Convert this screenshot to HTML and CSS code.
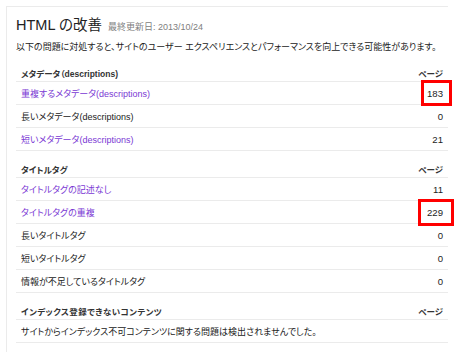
FILE: index.html
```html
<!DOCTYPE html>
<html lang="ja">
<head>
<meta charset="utf-8">
<title>HTML の改善</title>
<link rel="stylesheet" href="styles.css">
</head>
<body>
<div class="card">
  <div class="title-row">
    <h1 class="title">HTML の改善</h1>
    <span class="updated">最終更新日: 2013/10/24</span>
  </div>
  <p class="intro">以下の問題に対処すると、サイトのユーザー エクスペリエンスとパフォーマンスを向上できる可能性があります。</p>

  <div class="section">
    <div class="row head"><span class="label">メタデータ（descriptions)</span><span class="num">ページ</span></div>
    <div class="row"><a class="label link" href="#">重複するメタデータ(descriptions)</a><span class="num hl hl-a">183</span></div>
    <div class="row"><span class="label">長いメタデータ(descriptions)</span><span class="num">0</span></div>
    <div class="row"><a class="label link" href="#">短いメタデータ(descriptions)</a><span class="num">21</span></div>
  </div>

  <div class="section">
    <div class="row head"><span class="label">タイトルタグ</span><span class="num">ページ</span></div>
    <div class="row"><a class="label link" href="#">タイトルタグの記述なし</a><span class="num">11</span></div>
    <div class="row"><a class="label link" href="#">タイトルタグの重複</a><span class="num hl hl-b">229</span></div>
    <div class="row"><span class="label">長いタイトルタグ</span><span class="num">0</span></div>
    <div class="row"><span class="label">短いタイトルタグ</span><span class="num">0</span></div>
    <div class="row"><span class="label">情報が不足しているタイトルタグ</span><span class="num">0</span></div>
  </div>

  <div class="section">
    <div class="row head"><span class="label wide">インデックス登録できないコンテンツ</span><span class="num">ページ</span></div>
    <div class="row"><span class="label">サイトからインデックス不可コンテンツに関する問題は検出されませんでした。</span></div>
  </div>
</div>
</body>
</html>
```
FILE: styles.css
```css
html, body {
  margin: 0;
  padding: 0;
  background: #ffffff;
}
body {
  font-family: "Liberation Sans", "Noto Sans CJK JP", sans-serif;
  color: #222222;
  font-feature-settings: "palt";
}
.card {
  margin: 6px 22px 0 6px;
  border-top: 1px solid #ebebeb;
  border-left: 1px solid #ebebeb;
  padding: 8px 0 9px 9px;
}
.title-row {
  display: flex;
  align-items: baseline;
  gap: 6px;
  height: 20px;
  line-height: 20px;
}
.title {
  margin: 0;
  font-size: 14.5px;
  font-weight: normal;
  color: #222222;
}
.updated {
  font-size: 9px;
  color: #808080;
}
.intro {
  margin: 4px 0 0 0;
  font-size: 9px;
  line-height: 16px;
  color: #222222;
  white-space: nowrap;
}
.section {
  margin-top: 10px;
}
.row {
  display: flex;
  align-items: center;
  justify-content: space-between;
  height: 22px;
  padding: 0 5px;
  border-bottom: 1px solid #ebebeb;
  font-size: 9px;
}
.row.head {
  height: 16px;
  font-size: 8.5px;
  font-weight: bold;
  color: #333333;
}
.label {
  white-space: nowrap;
}
.label.wide {
  letter-spacing: 0.4px;
}
.link {
  color: #7a38d4;
  text-decoration: none;
}
.num {
  position: relative;
  text-align: right;
  font-size: 9.6px;
}
.row.head .num {
  font-size: 8.5px;
}
.hl::after {
  content: "";
  position: absolute;
  border: 3px solid #ff0000;
  box-sizing: border-box;
}
.hl-a::after {
  top: -8px;
  bottom: -7px;
  right: -9px;
  width: 31px;
}
.hl-b::after {
  top: -8px;
  bottom: -8px;
  right: -11px;
  width: 36px;
}
```
